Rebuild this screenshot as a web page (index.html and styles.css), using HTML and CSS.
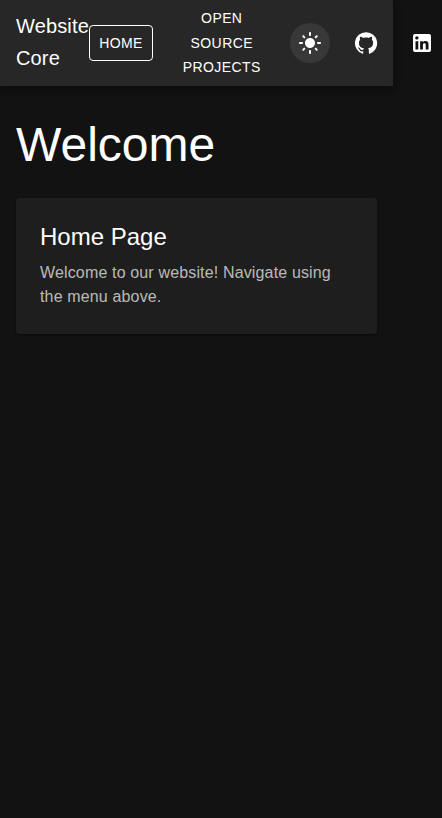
FILE: index.html
```html
<!DOCTYPE html>
<html lang="en">
<head>
<meta charset="utf-8">
<title>Website Core</title>
<link rel="stylesheet" href="styles.css">
</head>
<body>
<div class="app">
  <header class="app-bar">
    <div class="brand">Website Core</div>
    <nav class="nav">
      <a class="btn btn-active">Home</a>
      <a class="btn btn-projects">Open Source Projects</a>
      <button class="icon-btn theme-toggle" aria-label="Toggle theme"><svg viewBox="0 0 24 24"><path d="M12 7c-2.760 0-5 2.240-5 5s2.240 5 5 5 5-2.240 5-5-2.240-5-5-5zM2 13h2c.55 0 1-.45 1-1s-.45-1-1-1H2c-.55 0-1 .45-1 1s.45 1 1 1zm18 0h2c.55 0 1-.45 1-1s-.45-1-1-1h-2c-.55 0-1 .45-1 1s.45 1 1 1zM11 2v2c0 .55.45 1 1 1s1-.45 1-1V2c0-.55-.45-1-1-1s-1 .45-1 1zm0 18v2c0 .55.45 1 1 1s1-.45 1-1v-2c0-.55-.45-1-1-1s-1 .45-1 1zM5.990 4.580c-.39-.39-1.030-.39-1.410 0-.39.39-.39 1.030 0 1.410l1.060 1.060c.39.39 1.030.39 1.410 0s.39-1.030 0-1.410L5.990 4.580zm12.370 12.370c-.39-.39-1.030-.39-1.410 0-.39.39-.39 1.030 0 1.410l1.060 1.060c.39.39 1.030.39 1.410 0 .39-.39.39-1.030 0-1.410l-1.060-1.060zm1.060-10.960c.39-.39.39-1.030 0-1.410-.39-.39-1.030-.39-1.410 0l-1.060 1.060c-.39.39-.39 1.030 0 1.410s1.030.39 1.410 0l1.060-1.060zM7.050 18.360c.39-.39.39-1.030 0-1.410-.39-.39-1.030-.39-1.410 0l-1.060 1.060c-.39.39-.39 1.030 0 1.410s1.030.39 1.410 0l1.060-1.060z"/></svg></button>
      <a class="icon-btn" aria-label="GitHub"><svg viewBox="0 0 24 24"><path d="M12 1.270a11 11 0 00-3.480 21.460c.55.09.73-.28.73-.55v-1.840c-3.030.64-3.670-1.460-3.670-1.460-.55-1.290-1.280-1.650-1.280-1.650-.92-.65.1-.65.1-.65 1.100 0 1.730 1.100 1.730 1.100.92 1.650 2.570 1.200 3.210.92a2 2 0 01.64-1.470c-2.470-.27-5.040-1.190-5.040-5.500 0-1.100.46-2.100 1.200-2.840a3.760 3.760 0 010-2.930s.91-.28 3.110 1.100c1.800-.49 3.700-.49 5.500 0 2.100-1.380 3.020-1.100 3.020-1.100a3.760 3.760 0 01.1 2.930c.83.740 1.200 1.740 1.200 2.940 0 4.210-2.570 5.130-5.040 5.400.45.370.82.920.82 2.020v3.030c0 .27.1.64.73.55A11 11 0 0012 1.270"/></svg></a>
      <a class="icon-btn" aria-label="LinkedIn"><svg viewBox="0 0 24 24"><path d="M19 3a2 2 0 0 1 2 2v14a2 2 0 0 1-2 2H5a2 2 0 0 1-2-2V5a2 2 0 0 1 2-2h14m-.5 15.500v-5.300a3.260 3.260 0 0 0-3.260-3.260c-.85 0-1.840.52-2.320 1.300v-1.110h-2.790v8.370h2.790v-4.930c0-.77.62-1.400 1.390-1.400a1.400 1.400 0 0 1 1.400 1.400v4.930h2.790M6.880 8.560a1.680 1.680 0 0 0 1.680-1.680c0-.93-.75-1.690-1.680-1.690a1.690 1.690 0 0 0-1.690 1.690c0 .93.76 1.680 1.690 1.680m1.390 9.940v-8.370H5.500v8.370h2.770z"/></svg></a>
    </nav>
  </header>
  <main class="content">
    <h1>Welcome</h1>
    <section class="card">
      <h2>Home Page</h2>
      <p>Welcome to our website! Navigate using the menu above.</p>
    </section>
  </main>
</div>
</body>
</html>
```
FILE: styles.css
```css
* { box-sizing: border-box; }
html { overflow: hidden; }
body {
  margin: 0;
  min-height: 100vh;
  background: #121212;
  color: #fff;
  font-family: "Liberation Sans", Arial, sans-serif;
}
.app { width: 393px; }
.app-bar {
  display: flex;
  align-items: center;
  height: 86px;
  padding: 0 16px;
  background: #272727;
  box-shadow: 0 2px 4px -1px rgba(0,0,0,.2), 0 4px 5px rgba(0,0,0,.14), 0 1px 10px rgba(0,0,0,.12);
}
.brand {
  flex: 0 0 73px;
  padding-bottom: 2px;
  font-size: 20px;
  line-height: 32px;
  letter-spacing: .15px;
}
.nav { display: flex; flex: none; align-items: center; gap: 16px; }
.btn {
  min-width: 64px;
  padding: 5px 9px;
  border: 1px solid transparent;
  border-radius: 4px;
  font-size: 14px;
  line-height: 24.5px;
  letter-spacing: .4px;
  text-align: center;
  text-transform: uppercase;
}
.btn-active { border-color: #fff; }
.btn-projects { width: 105px; padding-left: 9.5px; }
.icon-btn {
  display: flex;
  width: 40px;
  height: 40px;
  padding: 8px;
  border: 0;
  border-radius: 50%;
  background: none;
  color: #fff;
}
.theme-toggle { background: #383838; }
.icon-btn svg { width: 24px; height: 24px; fill: currentColor; }
.content { padding: 31px 16px; }
h1 {
  margin: 0 0 25px;
  font-size: 48px;
  font-weight: 400;
  line-height: 56px;
}
.card {
  height: 136px;
  padding: 23px 24px 24px;
  border-radius: 4px;
  background: #1e1e1e;
  box-shadow: 0 2px 1px -1px rgba(0,0,0,.2), 0 1px 1px rgba(0,0,0,.14), 0 1px 3px rgba(0,0,0,.12);
}
h2 { margin: 0 0 8px; font-size: 24px; font-weight: 400; line-height: 32px; }
.card p {
  margin: 0;
  color: rgba(255,255,255,.7);
  font-size: 16px;
  line-height: 24px;
  letter-spacing: .15px;
}
```
